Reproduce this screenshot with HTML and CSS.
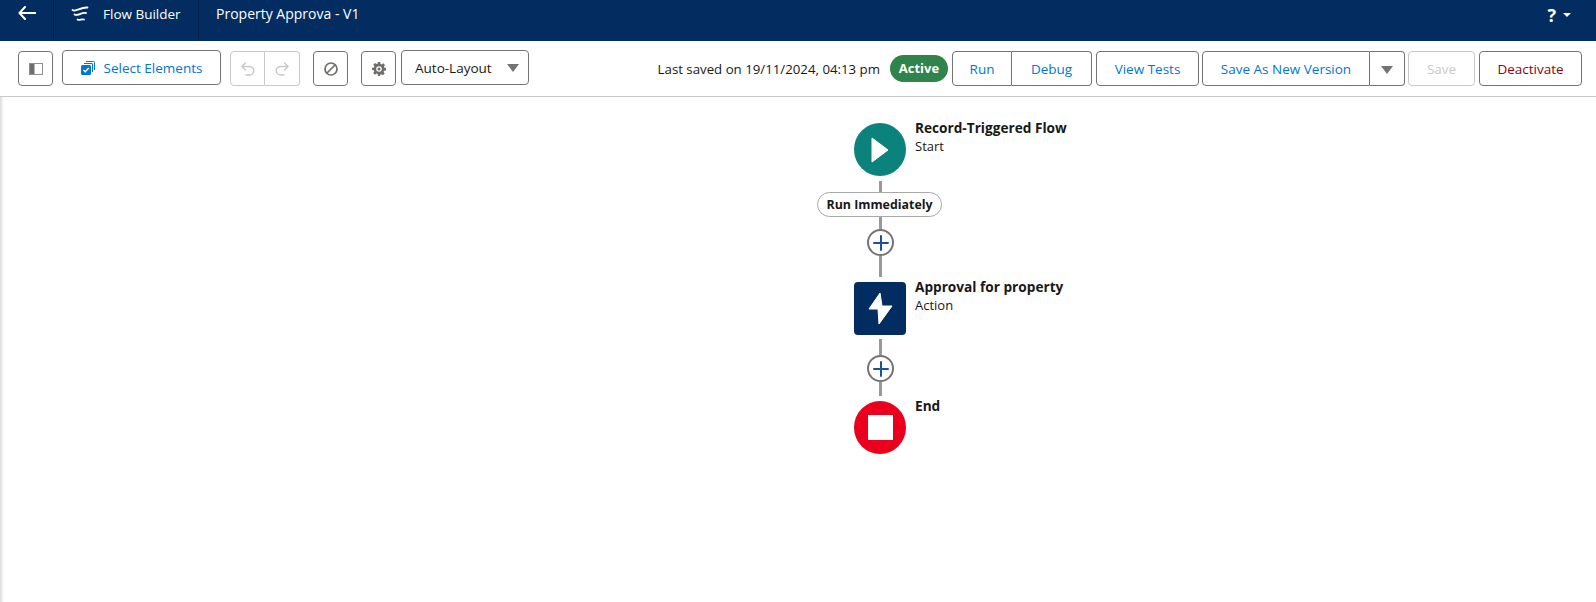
FILE: index.html
```html
<!DOCTYPE html>
<html lang="en">
<head>
  <meta charset="UTF-8" />
  <title>Flow Builder</title>
  <link rel="stylesheet" href="styles.css">
</head>
<body>
  <header class="topbar">
    <div class="back">
      <svg width="18" height="14" viewBox="0 0 18 14"><path d="M7 1 1.500 7 7 13M2 7h15.500" fill="none" stroke="#fff" stroke-width="2" stroke-linecap="round" stroke-linejoin="round"/></svg>
    </div>
    <div class="brand">
      <svg width="18" height="18" viewBox="0 0 18 18"><path d="M1.500 5C5 7.500 9 2 16.500 2.500M3.500 9.500C7 11.500 10 7 15 8M6.500 14.500C9 16 10 13.500 13 14.500" fill="none" stroke="#fff" stroke-width="1.800" stroke-linecap="round"/></svg>
      <span>Flow Builder</span>
    </div>
    <div class="flow-title">Property Approva - V1</div>
    <div class="help">
      <span class="help-mark">?</span>
      <span class="caret-white"></span>
    </div>
  </header>

  <div class="toolbar">
    <button class="btn icon-btn panel-btn">
      <svg width="14" height="12" viewBox="0 0 14 12"><rect x=".5" y=".5" width="13" height="11" fill="#fff" stroke="#8f8f8f"/><rect x="1" y="1" width="4.500" height="10" fill="#706e6b"/></svg>
    </button>
    <button class="btn select-btn">
      <svg width="14" height="14" viewBox="0 0 14 14"><path d="M5 .5h7.500a1 1 0 0 1 1 1V9" fill="none" stroke="#0176d3"/><path d="M3 2.500h8a.5.5 0 0 1 .5.5v8" fill="none" stroke="#0176d3"/><rect x="0" y="4" width="10" height="10" rx="1.500" fill="#0176d3"/><path d="m2.500 9 1.800 1.800L7.800 7" fill="none" stroke="#fff" stroke-width="1.400"/></svg>
      <span>Select Elements</span>
    </button>
    <div class="btn-group group-disabled">
      <button class="btn icon-btn seg">
        <svg width="14" height="14" viewBox="0 0 14 14"><path d="M4.500 1 1 4.500 4.500 8M1.500 4.500H8.500a4 4 0 0 1 0 8.500H5" fill="none" stroke="#c9c9c9" stroke-width="1.500" stroke-linecap="round" stroke-linejoin="round"/></svg>
      </button>
      <button class="btn icon-btn seg">
        <svg width="14" height="14" viewBox="0 0 14 14"><path d="M9.500 1 13 4.500 9.500 8M12.500 4.500H5.500a4 4 0 0 0 0 8.500H9" fill="none" stroke="#c9c9c9" stroke-width="1.500" stroke-linecap="round" stroke-linejoin="round"/></svg>
      </button>
    </div>
    <button class="btn icon-btn stop-btn">
      <svg width="14" height="14" viewBox="0 0 14 14"><circle cx="7" cy="7" r="6" fill="none" stroke="#706e6b" stroke-width="1.700"/><path d="M3 11 11 3" stroke="#706e6b" stroke-width="1.700"/></svg>
    </button>
    <button class="btn icon-btn gear-btn">
      <svg width="14" height="14" viewBox="0 0 14 14"><path d="M5.800 0h2.400l.3 1.900 1.200.5L11.300 1.300 13 3l-1.100 1.600.5 1.200 1.600.3v2.400l-1.900.3-.5 1.200 1.100 1.600L11 13.300l-1.600-1.100-1.200.5L7.900 14H6l-.3-1.900-1.200-.5L3 12.700 1.200 11l1.100-1.600-.5-1.200L0 7.900V5.700l1.900-.3.500-1.200L1.300 2.700 3 1l1.600 1.100 1-.4z" fill="#706e6b"/><circle cx="7" cy="7" r="2.800" fill="#fff"/><circle cx="7" cy="7" r="1.500" fill="#706e6b"/></svg>
    </button>
    <button class="btn layout-btn">
      <span>Auto-Layout</span>
      <span class="caret-grey"></span>
    </button>

    <span class="saved">Last saved on 19/11/2024, 04:13 pm</span>
    <span class="badge">Active</span>
    <div class="btn-group">
      <button class="btn seg run-seg">Run</button>
      <button class="btn seg debug-seg">Debug</button>
    </div>
    <button class="btn tests-btn">View Tests</button>
    <div class="btn-group">
      <button class="btn seg saveas-seg">Save As New Version</button>
      <button class="btn seg more-seg"><span class="caret-grey"></span></button>
    </div>
    <button class="btn save-btn">Save</button>
    <button class="btn deactivate-btn">Deactivate</button>
  </div>

  <main class="canvas">
    <div class="node">
      <div class="shape start">
        <svg width="18" height="26" viewBox="0 0 18 26"><path d="M1 1 17 13 1 25z" fill="#fff" stroke="#fff" stroke-linejoin="round"/></svg>
      </div>
      <div class="node-label">
        <div class="node-name">Record-Triggered Flow</div>
        <div class="node-type">Start</div>
      </div>
    </div>
    <div class="line line-a"></div>
    <div class="pill-wrap"><span class="pill">Run Immediately</span></div>
    <div class="line line-b"></div>
    <div class="plus">
      <svg width="16" height="16" viewBox="0 0 16 16"><path d="M8 1v14M1 8h14" stroke="#1b5297" stroke-width="2" stroke-linecap="round"/></svg>
    </div>
    <div class="line line-c"></div>

    <div class="node">
      <div class="shape action">
        <svg width="26" height="33" viewBox="0 0 26 33"><path d="M13 1 2 17h9l1 15L25 14H15z" fill="#fff" stroke="#fff" stroke-linejoin="round"/></svg>
      </div>
      <div class="node-label">
        <div class="node-name">Approval for property</div>
        <div class="node-type">Action</div>
      </div>
    </div>
    <div class="line line-d"></div>
    <div class="plus">
      <svg width="16" height="16" viewBox="0 0 16 16"><path d="M8 1v14M1 8h14" stroke="#1b5297" stroke-width="2" stroke-linecap="round"/></svg>
    </div>
    <div class="line line-e"></div>

    <div class="node">
      <div class="shape end"><div class="end-square"></div></div>
      <div class="node-label">
        <div class="node-name">End</div>
      </div>
    </div>
  </main>
</body>
</html>
```

FILE: styles.css
```css
* {
  box-sizing: border-box;
}

html, body {
  height: 100%;
}

body {
  margin: 0;
  font-family: "Open Sans", "Noto Sans", Arial, sans-serif;
  font-size: 13.500px;
  color: #181818;
  background: #fff;
  overflow: hidden;
}

/* top bar */
.topbar {
  display: flex;
  height: 41px;
  background: #032d60;
  color: #fff;
}

.back {
  width: 54px;
  padding: 6px 0 0 18px;
  border-right: 1px solid #01214a;
}

.brand {
  display: flex;
  align-items: flex-start;
  gap: 14px;
  width: 145px;
  padding: 5px 0 0 17px;
  border-right: 1px solid #01214a;
}

.flow-title {
  padding: 4px 0 0 17px;
  font-size: 14px;
}

.help {
  display: flex;
  align-items: center;
  gap: 7px;
  height: 30px;
  margin-left: auto;
  padding-right: 25px;
}

.help-mark {
  font-size: 18px;
  font-weight: 700;
}

.caret-white {
  width: 0;
  height: 0;
  border: 4px solid transparent;
  border-top: 4px solid #fff;
  border-bottom: 0;
}

/* toolbar */
.toolbar {
  display: flex;
  align-items: center;
  height: 56px;
  padding: 0 14px 0 18px;
  border-bottom: 1px solid #c9c9c9;
}

.btn {
  display: inline-flex;
  align-items: center;
  justify-content: center;
  height: 35px;
  padding: 0;
  background: #fff;
  border: 1px solid #747474;
  border-radius: 4px;
  font: inherit;
  color: #0176d3;
}

.icon-btn {
  width: 35px;
}

.panel-btn {
  margin-right: 9px;
}

.select-btn {
  gap: 9px;
  width: 159px;
  margin-right: 9px;
  margin-bottom: 2px;
}

.btn-group {
  display: flex;
}

.seg {
  border-radius: 0;
}

.seg:first-child {
  border-radius: 4px 0 0 4px;
}

.seg:last-child {
  border-left: 0;
  border-radius: 0 4px 4px 0;
}

.group-disabled .btn {
  border-color: #c9c9c9;
}

.group-disabled {
  margin-right: 13px;
}

.stop-btn {
  margin-right: 13px;
}

.gear-btn {
  margin-right: 5px;
}

.layout-btn {
  justify-content: space-between;
  width: 128px;
  margin-bottom: 2px;
  padding: 0 9px 0 13px;
  color: #181818;
}

.caret-grey {
  width: 0;
  height: 0;
  border: 6px solid transparent;
  border-top: 8px solid #747474;
  border-bottom: 0;
}

.more-seg .caret-grey {
  margin-top: 3px;
}

.saved {
  margin-left: auto;
  margin-right: 10px;
  font-size: 13.250px;
  white-space: nowrap;
}

.badge {
  height: 27px;
  width: 58px;
  margin-right: 4px;
  border-radius: 14px;
  background: #2e844a;
  color: #fff;
  font-size: 13px;
  font-weight: 700;
  line-height: 26px;
  text-align: center;
}

.run-seg {
  width: 60px;
}

.debug-seg {
  width: 80px;
}

.tests-btn {
  width: 103px;
  margin-left: 4px;
  margin-right: 3px;
}

.saveas-seg {
  width: 168px;
}

.more-seg {
  width: 35px;
}

.save-btn {
  width: 67px;
  margin-left: 3px;
  margin-right: 4px;
  border-color: #c9c9c9;
  color: #c9c9c9;
}

.deactivate-btn {
  width: 103px;
  color: #8e030f;
}

/* flow canvas */
.canvas {
  height: 505px;
  padding: 26px 0 0 854px;
  background: linear-gradient(to right, #dcdcdc, #fff 4px);
}

.node {
  display: flex;
  gap: 9px;
  height: 53px;
}

.shape {
  display: flex;
  flex: none;
  align-items: center;
  justify-content: center;
  width: 52px;
  height: 53px;
}

.start {
  border-radius: 50%;
  background: #0b827c;
}

.action {
  border-radius: 4px;
  background: #032d60;
}

.end {
  border-radius: 50%;
  background: #ea001e;
}

.end-square {
  width: 25px;
  height: 25px;
  background: #fff;
}

.node-label {
  margin-top: -4px;
  font-size: 13px;
  line-height: 18px;
}

.node-name {
  font-size: 13.650px;
  font-weight: 700;
  white-space: nowrap;
}

.line {
  width: 3px;
  margin-left: 25px;
  background: #999;
}

.line-a {
  height: 11px;
  margin-top: 5px;
}

.line-b {
  height: 12px;
}

.line-c {
  height: 21px;
  margin-bottom: 5px;
}

.line-d {
  height: 16px;
  margin-top: 4px;
}

.line-e {
  height: 14px;
  margin-bottom: 5px;
}

.pill-wrap {
  display: flex;
  width: 125px;
  margin-left: -37px;
}

.pill {
  width: 126px;
  height: 25px;
  border: 1px solid #a8a8a8;
  border-radius: 13px;
  background: #fff;
  font-size: 12.400px;
  font-weight: 700;
  line-height: 23px;
  text-align: center;
  white-space: nowrap;
}

.plus {
  display: flex;
  align-items: center;
  justify-content: center;
  width: 27px;
  height: 27px;
  margin-left: 13px;
  border: 2px solid #747474;
  border-radius: 50%;
  background: #fff;
}
```
